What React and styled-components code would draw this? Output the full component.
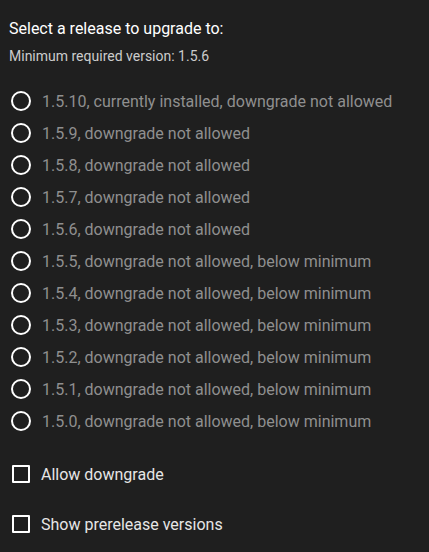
import React from "react";
import styled, { createGlobalStyle } from "styled-components";

const Global = createGlobalStyle`
  html, body { margin: 0; padding: 0; background: #1f1f1f; }
  body { font-family: Roboto, "Noto Sans", sans-serif; -webkit-font-smoothing: antialiased; }
`;

const Page = styled.div`
  width: 429px;
  height: 552px;
  background: #1f1f1f;
  box-sizing: border-box;
  padding: 17px 9px 0 9px;
`;

const Title = styled.div`
  color: #ffffff;
  font-size: 16px;
  line-height: 24px;
`;

const Subtitle = styled.div`
  color: #cccccc;
  font-size: 14px;
  line-height: 20px;
  margin-top: 5px;
`;

const RadioList = styled.div`
  display: flex;
  flex-direction: column;
  margin-top: 19px;
`;

const Row = styled.label`
  display: flex;
  align-items: center;
  height: 32px;
  gap: 11px;
  padding-left: 2px;
`;

const Radio = styled.span`
  width: 20px;
  height: 20px;
  box-sizing: border-box;
  border: 2px solid #ffffff;
  border-radius: 50%;
  flex: none;
`;

const RowText = styled.span`
  color: #8f8f8f;
  font-size: 16px;
`;

const CheckList = styled.div`
  display: flex;
  flex-direction: column;
  gap: 18px;
  margin-top: 21px;
`;

const CheckRow = styled.label`
  display: flex;
  align-items: center;
  height: 32px;
  gap: 11px;
  padding-left: 3px;
`;

const Box = styled.span`
  width: 18px;
  height: 18px;
  box-sizing: border-box;
  border: 2px solid #ffffff;
  border-radius: 1px;
  flex: none;
`;

const CheckText = styled.span`
  color: #e6e6e6;
  font-size: 16px;
`;

const releases = [
  "1.5.10, currently installed, downgrade not allowed",
  "1.5.9, downgrade not allowed",
  "1.5.8, downgrade not allowed",
  "1.5.7, downgrade not allowed",
  "1.5.6, downgrade not allowed",
  "1.5.5, downgrade not allowed, below minimum",
  "1.5.4, downgrade not allowed, below minimum",
  "1.5.3, downgrade not allowed, below minimum",
  "1.5.2, downgrade not allowed, below minimum",
  "1.5.1, downgrade not allowed, below minimum",
  "1.5.0, downgrade not allowed, below minimum",
];

export default function App() {
  return (
    <Page>
      <Global />
      <Title>Select a release to upgrade to:</Title>
      <Subtitle>Minimum required version: 1.5.6</Subtitle>
      <RadioList>
        {releases.map((r) => (
          <Row key={r}>
            <Radio />
            <RowText>{r}</RowText>
          </Row>
        ))}
      </RadioList>
      <CheckList>
        <CheckRow>
          <Box />
          <CheckText>Allow downgrade</CheckText>
        </CheckRow>
        <CheckRow>
          <Box />
          <CheckText>Show prerelease versions</CheckText>
        </CheckRow>
      </CheckList>
    </Page>
  );
}
